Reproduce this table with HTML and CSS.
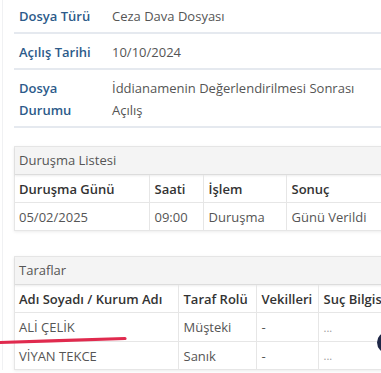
FILE: index.html
```html
<!DOCTYPE html>
<html lang="tr">
<head>
<meta charset="utf-8">
<link rel="stylesheet" href="styles.css">
</head>
<body>
<div class="page">
  <div class="info">
    <div class="info-row">
      <div class="label">Dosya Türü</div>
      <div class="value">Ceza Dava Dosyası</div>
    </div>
    <div class="info-row">
      <div class="label">Açılış Tarihi</div>
      <div class="value">10/10/2024</div>
    </div>
    <div class="info-row">
      <div class="label">Dosya Durumu</div>
      <div class="value">İddianamenin Değerlendirilmesi Sonrası Açılış</div>
    </div>
  </div>

  <div class="panel panel-hearings">
    <div class="panel-head">Duruşma Listesi</div>
    <table class="grid">
      <colgroup><col class="c-date"><col class="c-time"><col class="c-op"><col class="c-res"></colgroup>
      <thead><tr><th>Duruşma Günü</th><th>Saati</th><th>İşlem</th><th>Sonuç</th></tr></thead>
      <tbody><tr><td>05/02/2025</td><td>09:00</td><td>Duruşma</td><td>Günü Verildi</td></tr></tbody>
    </table>
  </div>

  <div class="panel panel-parties">
    <div class="panel-head">Taraflar</div>
    <table class="grid">
      <colgroup><col class="c-name"><col class="c-role"><col class="c-law"><col class="c-crime"></colgroup>
      <thead><tr><th>Adı Soyadı / Kurum Adı</th><th>Taraf Rolü</th><th>Vekilleri</th><th>Suç Bilgisi</th></tr></thead>
      <tbody>
        <tr class="tall"><td>ALİ ÇELİK</td><td>Müşteki</td><td>-</td><td class="dots">...</td></tr>
        <tr><td>VİYAN TEKCE</td><td>Sanık</td><td>-</td><td class="dots">...</td></tr>
      </tbody>
    </table>
  </div>
</div>
<svg class="scribble" width="130" height="12" viewBox="0 0 130 12"><path d="M0 8.5 C 40 7.5, 90 5.5, 125 4.5" stroke="#e02a4e" stroke-width="3.2" fill="none" stroke-linecap="round"/></svg>
<div class="fab"></div>
</body>
</html>
```
FILE: styles.css
```css
html, body { margin: 0; padding: 0; }
body {
  width: 381px;
  height: 373px;
  overflow: hidden;
  background: #fff;
  font-family: "Open Sans", "DejaVu Sans", sans-serif;
  font-size: 13px;
  color: #555;
  position: relative;
}
.page {
  margin: -2px 0 0 2px;
  padding-left: 11px;
  border-left: 1px solid #f0f1f3;
  width: 420px;
}
.info-row {
  display: flex;
  align-items: center;
  padding: 7px 0 5px;
  line-height: 22px;
  border-bottom: 2px solid #e5e9ef;
  width: 380px;
}
.label {
  width: 93px;
  padding-left: 5px;
  flex: none;
  color: #2d5b8a;
  font-weight: 600;
}
.value {
  width: 250px;
  color: #555;
}
.panel {
  border: 1px solid #e6e6e6;
  box-shadow: 0 1px 3px rgba(0,0,0,0.08);
  background: #fff;
}
.panel-hearings { margin-top: 18px; width: 380px; }
.panel-parties { margin-top: 25px; width: 420px; }
.panel-head {
  background: #f4f4f4;
  height: 27px;
  line-height: 27px;
  padding-left: 4px;
  color: #555;
  border-bottom: 1px solid #dcdcdc;
  box-shadow: 0 1px 2px rgba(0,0,0,0.08);
}
.grid {
  border-collapse: collapse;
  table-layout: fixed;
  width: 100%;
}
.grid th, .grid td {
  text-align: left;
  padding: 0 5px;
  height: 27px;
  border-left: 1px solid #e6e6e6;
  border-bottom: 1px solid #e6e6e6;
  white-space: nowrap;
  overflow: hidden;
}
.grid th:first-child, .grid td:first-child { border-left: none; padding-left: 4px; }
.grid tr:last-child td { border-bottom: none; }
.grid th { color: #333; font-weight: 600; }
.grid td { color: #555; }
.grid tr.tall td { height: 28px; }
.grid td.dots { color: #999; font-size: 11px; }
.c-date { width: 134px; }
.c-time { width: 54px; }
.c-op { width: 83px; }
.c-res { width: auto; }
.c-name { width: 163px; }
.c-role { width: 78px; }
.c-law { width: 62px; }
.c-crime { width: auto; }
.scribble {
  position: absolute;
  left: 0;
  top: 334px;
}
.fab {
  position: absolute;
  left: 377px;
  top: 332px;
  width: 30px;
  height: 21px;
  border-radius: 11px;
  background: #1e2747;
}
```
